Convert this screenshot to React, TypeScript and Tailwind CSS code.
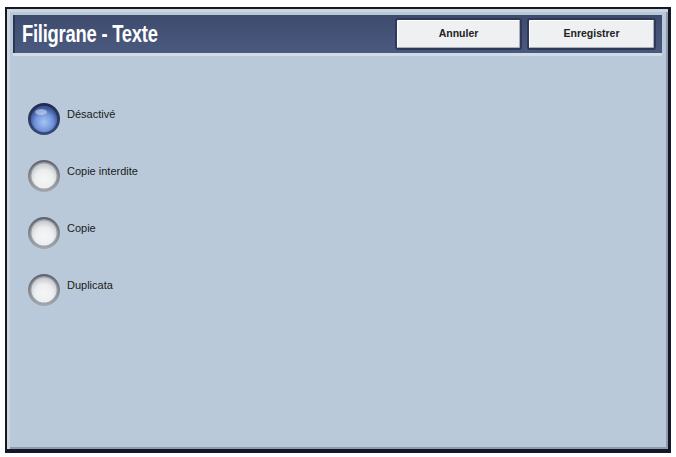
const labels = ["Désactivé", "Copie interdite", "Copie", "Duplicata"];

const Radio = ({ on, id }: { on: boolean; id: string }) => (
  <svg width="34" height="34" viewBox="0 0 34 34" className="shrink-0">
    <defs>
      <radialGradient id={`f${id}`} cx="50%" cy="62%" r="55%">
        {on ? (
          <>
            <stop offset="0%" stopColor="#a9c3f3" />
            <stop offset="60%" stopColor="#7396dc" />
            <stop offset="100%" stopColor="#3c5597" />
          </>
        ) : (
          <>
            <stop offset="0%" stopColor="#f6f6f6" />
            <stop offset="62%" stopColor="#eceeef" />
            <stop offset="100%" stopColor="#c9ccd1" />
          </>
        )}
      </radialGradient>
      <linearGradient id={`r${id}`} x1="0" y1="0" x2="0" y2="1">
        {on ? (
          <>
            <stop offset="0%" stopColor="#1f2a4d" />
            <stop offset="100%" stopColor="#3a4a78" />
          </>
        ) : (
          <>
            <stop offset="0%" stopColor="#5e636c" />
            <stop offset="100%" stopColor="#a4a8ae" />
          </>
        )}
      </linearGradient>
    </defs>
    <circle cx="17" cy="17" r="16" fill={`url(#r${id})`} />
    <circle cx="17" cy="17" r="13.2" fill={`url(#f${id})`} />
    {on ? (
      <ellipse cx="14" cy="10" rx="6" ry="3" fill="#d6e2fa" opacity="0.55" />
    ) : (
      <circle cx="17" cy="17" r="13.2" fill="none" stroke="#9a9ea6" strokeWidth="1.2" />
    )}
  </svg>
);

export default function App() {
  return (
    <div className="w-[676px] h-[457px] bg-white pt-[7px] pl-[5px] [font-family:'Liberation_Sans',Arial,sans-serif]">
      <div className="w-[666px] h-[446px] bg-[#b9c9d9] border-t-2 border-l-2 border-r-[3px] border-b-4 border-[#151926] shadow-[inset_3px_3px_0_#cdd6e0,inset_-2px_-2px_0_#8d9bb0] flex flex-col">
        <div className="mx-[6px] mt-[6px] h-[41px] bg-gradient-to-b from-[#3e4b6d] to-[#4a5a7f] border-b-[3px] border-[#d3dce6] flex items-center pl-[9px] pr-[6px] shadow-[inset_2px_0_0_#2c3654]">
          <h1 className="text-white font-bold text-[23px] leading-none tracking-[-0.3px] scale-x-[0.8] origin-left whitespace-nowrap w-[145px]">
            Filigrane - Texte
          </h1>
          <div className="ml-auto flex gap-[5px] items-center">
            <button className="w-[127px] h-[32px] rounded-[3px] bg-[#eef0f2] border-2 border-[#2f3a58] shadow-[inset_1px_1px_0_#ffffff,inset_-1px_-1px_0_#a9b0bb] text-[10.5px] font-bold text-[#222]">
              Annuler
            </button>
            <button className="w-[129px] h-[32px] rounded-[3px] bg-[#eef0f2] border-2 border-[#2f3a58] shadow-[inset_1px_1px_0_#ffffff,inset_-1px_-1px_0_#a9b0bb] text-[10.5px] font-bold text-[#222]">
              Enregistrer
            </button>
          </div>
        </div>
        <div className="flex flex-col gap-[23px] pt-[46px] pl-[20px]">
          {labels.map((l, i) => (
            <div key={l} className="flex items-start gap-[6px]">
              <Radio on={i === 0} id={String(i)} />
              <span className="text-[11px] text-[#1b1b1b] mt-[4px]">{l}</span>
            </div>
          ))}
        </div>
      </div>
    </div>
  );
}
